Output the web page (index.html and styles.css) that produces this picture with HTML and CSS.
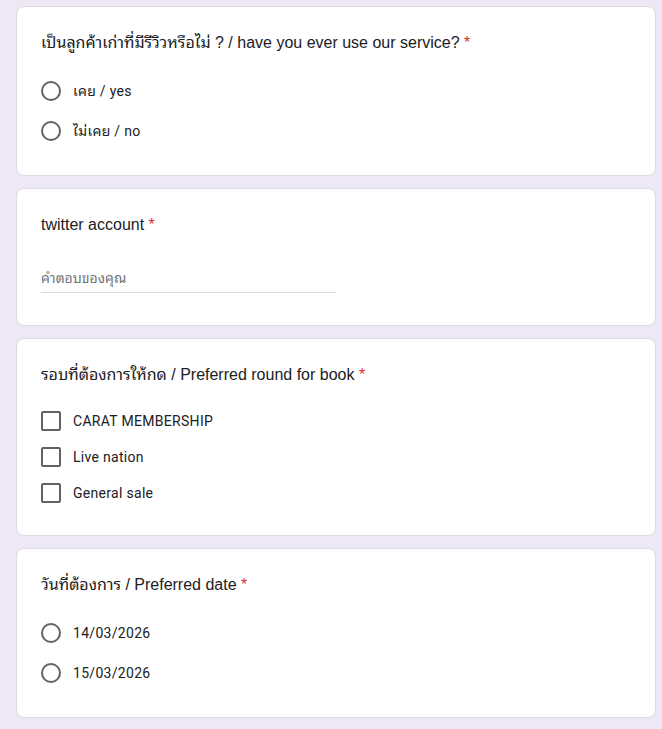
FILE: index.html
```html
<!DOCTYPE html>
<html lang="th">
<head>
<meta charset="utf-8">
<title>Form</title>
<link rel="stylesheet" href="styles.css">
</head>
<body>
<main class="form">
  <section class="card">
    <div class="q-title">เป็นลูกค้าเก่าที่มีรีวิวหรือไม่ ? / have you ever use our service? <span class="req">*</span></div>
    <div class="options">
      <label class="opt radio-row"><span class="radio"></span><span class="opt-label">เคย / yes</span></label>
      <label class="opt radio-row"><span class="radio"></span><span class="opt-label">ไม่เคย / no</span></label>
    </div>
  </section>

  <section class="card">
    <div class="q-title">twitter account <span class="req">*</span></div>
    <div class="text-input">
      <span class="placeholder">คำตอบของคุณ</span>
    </div>
  </section>

  <section class="card">
    <div class="q-title">รอบที่ต้องการให้กด / Preferred round for book <span class="req">*</span></div>
    <div class="options">
      <label class="opt check-row"><span class="checkbox"></span><span class="opt-label">CARAT MEMBERSHIP</span></label>
      <label class="opt check-row"><span class="checkbox"></span><span class="opt-label">Live nation</span></label>
      <label class="opt check-row"><span class="checkbox"></span><span class="opt-label">General sale</span></label>
    </div>
  </section>

  <section class="card">
    <div class="q-title">วันที่ต้องการ / Preferred date <span class="req">*</span></div>
    <div class="options">
      <label class="opt radio-row"><span class="radio"></span><span class="opt-label">14/03/2026</span></label>
      <label class="opt radio-row"><span class="radio"></span><span class="opt-label">15/03/2026</span></label>
    </div>
  </section>
</main>
</body>
</html>
```

FILE: styles.css
```css
html, body {
  margin: 0;
  padding: 0;
}
body {
  background: #ede7f6;
  font-family: Roboto, "Noto Sans", "Noto Sans Thai Looped", "Noto Sans Thai", "DejaVu Sans", sans-serif;
  color: #202124;
}
.form {
  display: flex;
  flex-direction: column;
  gap: 12px;
  padding: 6px 6px 20px 16px;
  width: 640px;
}
.card {
  background: #fff;
  border: 1px solid #dadce0;
  border-radius: 8px;
  padding: 24px;
}
.q-title {
  font-family: "Liberation Sans", Arial, "Noto Sans Thai Looped", "Noto Sans Thai", sans-serif;
  font-size: 16px;
  line-height: 24px;
  letter-spacing: 0;
  color: #202124;
}
.req {
  color: #d93025;
}
.options {
  display: flex;
  flex-direction: column;
  margin-top: 16px;
}
.opt {
  display: flex;
  align-items: center;
  gap: 12px;
  font-size: 14px;
  line-height: 20px;
  letter-spacing: 0.3px;
  color: #202124;
}
.opt-label {
  display: block;
  height: 20px;
  line-height: 20px;
}
.radio-row {
  height: 40px;
}
.check-row {
  height: 36px;
}
.radio {
  box-sizing: border-box;
  width: 20px;
  height: 20px;
  border: 2px solid #5f6368;
  border-radius: 50%;
  flex: none;
}
.checkbox {
  box-sizing: border-box;
  width: 20px;
  height: 20px;
  border: 2px solid #5f6368;
  border-radius: 2px;
  flex: none;
}
.text-input {
  width: 295px;
  margin-top: 31px;
  margin-bottom: 8px;
  padding-bottom: 4px;
  border-bottom: 1px solid #dadce0;
  font-size: 14px;
  line-height: 20px;
}
.placeholder {
  color: #70757a;
}
```
